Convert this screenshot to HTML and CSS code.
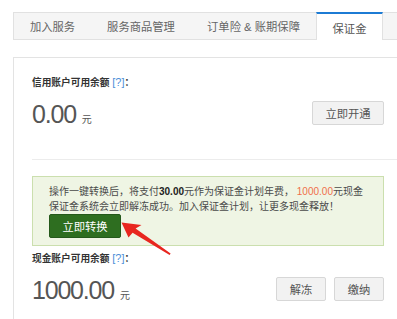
FILE: index.html
```html
<!DOCTYPE html>
<html lang="zh-CN">
<head>
<meta charset="utf-8">
<title>保证金</title>
<link rel="stylesheet" href="styles.css">
</head>
<body>
<div class="page">
  <nav class="tabs">
    <div class="tab tab-1">加入服务</div>
    <div class="tab tab-2">服务商品管理</div>
    <div class="tab tab-3">订单险 &amp; 账期保障</div>
    <div class="tab tab-active">保证金</div>
  </nav>

  <div class="card">
    <section class="section section-credit">
      <div class="label">信用账户可用余额 <span class="help">[?]</span>：</div>
      <div class="row">
        <div class="amount">0.00<span class="unit">元</span></div>
        <button class="btn btn-wide">立即开通</button>
      </div>
    </section>

    <section class="section-cash">
      <div class="notice">
        <p class="notice-text">操作一键转换后，将支付<b>30.00</b>元作为保证金计划年费， <span class="hl">1000.00</span>元现金<br>保证金系统会立即解冻成功。加入保证金计划，让更多现金释放！</p>
        <button class="btn-green">立即转换</button>
      </div>
      <div class="label label-cash">现金账户可用余额 <span class="help">[?]</span>：</div>
      <div class="row">
        <div class="amount">1000.00<span class="unit">元</span></div>
        <div class="actions">
          <button class="btn">解冻</button>
          <button class="btn">缴纳</button>
        </div>
      </div>
    </section>
    <div class="card-footer"></div>
  </div>
</div>

<svg class="arrow" width="397" height="319" viewBox="0 0 397 319" aria-hidden="true">
  <polygon points="121.5,222.5 141.5,225 135.6,228.6 170.6,253.6 169.6,255 132.6,232.8 128.5,237.5" fill="#e8261f"/>
</svg>
</body>
</html>
```

FILE: styles.css
```css
html, body {
  margin: 0;
  padding: 0;
  background: #ffffff;
}

body {
  position: relative;
  width: 397px;
  height: 319px;
  overflow: hidden;
  font-family: "Liberation Sans", "Noto Sans CJK SC", sans-serif;
  color: #444;
}

.page {
  margin-left: 13px;
  padding-top: 12px;
  width: 400px;
}

/* Tabs */
.tabs {
  display: flex;
  height: 26px;
  border: 1px solid #e1e1e1;
  background: #f5f5f5;
}

.tab {
  flex: none;
  box-sizing: border-box;
  text-align: center;
  font-size: 11.3px;
  line-height: 26px;
  padding-top: 1px;
  color: #666;
}

.tab-1 { width: 77px; }
.tab-2 { width: 100px; }
.tab-3 { width: 125px; }

.tab-active {
  width: 67px;
  margin: -1px 0 -1px 0;
  border-top: 2px solid #1c7bd4;
  border-left: 1px solid #e1e1e1;
  border-right: 1px solid #e1e1e1;
  background: #ffffff;
  padding-top: 2px;
  color: #555;
}

/* Card */
.card {
  margin-top: 17px;
  border: 1px solid #e3e3e3;
  padding-left: 18px;
}

.section-credit {
  padding: 17px 0 24px 0;
  border-bottom: 1px solid #ececec;
}

.label {
  font-size: 9.7px;
  line-height: 15px;
  font-weight: bold;
  color: #333;
}

.help {
  font-size: 11px;
  font-weight: normal;
  color: #4b8fd8;
}

.row {
  display: flex;
  justify-content: space-between;
  align-items: flex-end;
  margin-top: 9px;
  padding-right: 28px;
}

.amount {
  font-size: 25px;
  line-height: 30px;
  letter-spacing: -1.2px;
  color: #555;
}

.unit {
  font-size: 10px;
  letter-spacing: 0;
  margin-left: 6px;
  color: #555;
}

.btn {
  box-sizing: border-box;
  height: 24px;
  width: 50px;
  margin-bottom: 10px;
  padding: 0;
  border: 1px solid #d7d7d7;
  border-radius: 2px;
  background: #f2f2f2;
  font-family: inherit;
  font-size: 11.3px;
  color: #555;
}

.btn-wide {
  width: 72px;
}

.actions {
  display: flex;
  gap: 8px;
}

/* Cash section */
.section-cash {
  padding-top: 16px;
  padding-bottom: 10px;
}

.notice {
  box-sizing: border-box;
  width: 352px;
  border: 1px solid #cbdfae;
  background: #eff5e4;
  padding: 7px 16px;
}

.notice-text {
  margin: 0;
  font-size: 10px;
  line-height: 15px;
  color: #4a4a4a;
  white-space: nowrap;
}

.notice-text b {
  color: #222;
}

.hl {
  color: #f0704b;
}

.btn-green {
  display: block;
  box-sizing: border-box;
  width: 72px;
  height: 24px;
  padding: 0;
  border: 1px solid #25591b;
  border-radius: 2px;
  background: #2e6e20;
  font-family: inherit;
  font-size: 11.3px;
  color: #ffffff;
}

.label-cash {
  margin-top: 5px;
}

.card-footer {
  height: 12px;
  margin-left: -18px;
  background: #f5f5f5;
}

/* Overlay annotation arrow */
.arrow {
  position: absolute;
  left: 0;
  top: 0;
  pointer-events: none;
}
```
